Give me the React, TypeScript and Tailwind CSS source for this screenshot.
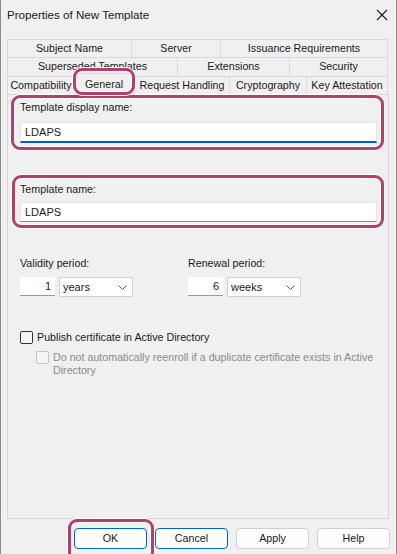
import React from "react"

const font = { fontFamily: '"Liberation Sans", Arial, sans-serif' }

function Tab({ label, w }: { label: string; w: string }) {
    return (
        <div
            className={`${w} h-[18px] flex items-center justify-center border-t border-l border-[#d9d9d9] bg-[#f0f0f0] text-[10.7px] text-[#1a1a1a] leading-none`}
        >
            {label}
        </div>
    )
}

function Chevron() {
    return (
        <svg width="9" height="5" viewBox="0 0 9 5" className="text-[#5a5a5a]">
            <polyline points="0.5,0.5 4.5,4.5 8.5,0.5" fill="none" stroke="currentColor" strokeWidth="1" />
        </svg>
    )
}

function Period({ label, num, unit }: { label: string; num: string; unit: string }) {
    return (
        <div className="flex flex-col w-[114px]">
            <div className="text-[10.7px] leading-none h-[12px] mb-[7px]">{label}</div>
            <div className="flex gap-[4px]">
                <div className="w-[35px] h-[19px] bg-white border-b border-[#9a9a9a] flex items-center justify-end pr-[4px] text-[11px]">
                    {num}
                </div>
                <div className="w-[74px] h-[20px] bg-white border border-[#d0d0d0] flex items-center justify-between pl-[3px] pr-[5px] text-[11px]">
                    <span>{unit}</span>
                    <Chevron />
                </div>
            </div>
        </div>
    )
}

function Button({ label, focused }: { label: string; focused?: boolean }) {
    return (
        <div
            className={`w-[73px] h-[21px] rounded-[4px] bg-[#fdfdfd] border flex items-center justify-center text-[10.7px] ${
                focused ? "border-[#0067c0]" : "border-[#d0d0d0]"
            }`}
        >
            {label}
        </div>
    )
}

export default function App() {
    return (
        <div
            style={font}
            className="relative w-[397px] h-[554px] overflow-hidden bg-[#f0f0f0] border-x border-[#8c8c8c] text-[#1a1a1a] flex flex-col"
        >
            {/* Title bar */}
            <div className="h-[30px] flex items-center justify-between pl-[6px] pr-[8px] shrink-0">
                <span className="text-[11.6px]">Properties of New Template</span>
                <svg width="12" height="12" viewBox="0 0 12 12">
                    <path d="M1 1 L11 11 M11 1 L1 11" stroke="#1a1a1a" strokeWidth="1.1" />
                </svg>
            </div>

            {/* Tabs */}
            <div className="mt-[9px] ml-[6px] w-[381px] flex flex-col">
                <div className="flex border-r border-[#d9d9d9]">
                    <Tab label="Subject Name" w="w-[124px]" />
                    <Tab label="Server" w="w-[89px]" />
                    <Tab label="Issuance Requirements" w="w-[167px]" />
                </div>
                <div className="flex border-r border-[#d9d9d9]">
                    <Tab label="Superseded Templates" w="w-[170px]" />
                    <Tab label="Extensions" w="w-[112px]" />
                    <Tab label="Security" w="w-[98px]" />
                </div>
                <div className="flex items-end h-[19px] border-r border-[#d9d9d9]">
                    <Tab label="Compatibility" w="w-[67px]" />
                    <div className="w-[60px] h-[22px] -mb-[1px] flex items-center justify-center border-t border-l border-r border-[#d9d9d9] bg-[#f0f0f0] text-[10.7px] relative z-10">
                        General
                    </div>
                    <Tab label="Request Handling" w="w-[95px]" />
                    <Tab label="Cryptography" w="w-[77px]" />
                    <Tab label="Key Attestation" w="w-[81px]" />
                </div>
            </div>

            {/* Panel */}
            <div className="ml-[6px] w-[382px] h-[425px] border border-[#d6d6d6] bg-[#f0f0f0] pl-[12px] pr-[11px] pt-[7px] flex flex-col">
                <div className="text-[10.7px] leading-none h-[12px]">Template display name:</div>
                <div className="mt-[8px] h-[21px] bg-white border-x border-t border-[#e6e6e6] border-b-2 border-b-[#005fb8] flex items-center pl-[4px] text-[11px]">
                    LDAPS
                </div>

                <div className="mt-[41px] text-[10.7px] leading-none h-[12px]">Template name:</div>
                <div className="mt-[6px] h-[20px] bg-white border-x border-t border-[#e6e6e6] border-b border-b-[#8a8a8a] flex items-center pl-[4px] text-[11px]">
                    LDAPS
                </div>

                <div className="mt-[36px] flex gap-[54px]">
                    <Period label="Validity period:" num="1" unit="years" />
                    <Period label="Renewal period:" num="6" unit="weeks" />
                </div>

                <div className="mt-[32px] flex items-center gap-[4px] text-[10.7px]">
                    <div className="w-[13px] h-[13px] rounded-[2px] border border-[#333333] bg-[#f7f7f7]" />
                    <span>Publish certificate in Active Directory</span>
                </div>
                <div className="mt-[6px] ml-[16px] flex items-start gap-[4px] text-[10.7px] text-[#8a8a8a] leading-[13px]">
                    <div className="w-[13px] h-[13px] shrink-0 rounded-[2px] border border-[#c5c5c5] bg-[#f5f5f5]" />
                    <span className="w-[322px]">
                        Do not automatically reenroll if a duplicate certificate exists in Active Directory
                    </span>
                </div>
            </div>

            {/* Buttons */}
            <div className="mt-[9px] ml-[73px] flex gap-[8px]">
                <Button label="OK" focused />
                <Button label="Cancel" focused />
                <Button label="Apply" />
                <Button label="Help" />
            </div>

            {/* Annotation highlights */}
            <div className="absolute left-[10px] top-[95px] w-[373px] h-[55px] rounded-[9px] border-[3px] border-[#b43f6b] shadow-[0_0_0_1px_white,inset_0_0_0_1px_white]" />
            <div className="absolute left-[11px] top-[175px] w-[372px] h-[53px] rounded-[9px] border-[3px] border-[#b43f6b] shadow-[0_0_0_1px_white,inset_0_0_0_1px_white]" />
            <div className="absolute left-[72px] top-[68px] w-[62px] h-[27px] rounded-[9px] border-[3px] border-[#b43f6b] shadow-[0_0_0_1px_white,inset_0_0_0_1px_white] z-20" />
            <div className="absolute left-[67px] top-[519px] w-[86px] h-[42px] rounded-[9px] border-[3px] border-[#b43f6b] shadow-[0_0_0_1px_white,inset_0_0_0_1px_white]" />
        </div>
    )
}
